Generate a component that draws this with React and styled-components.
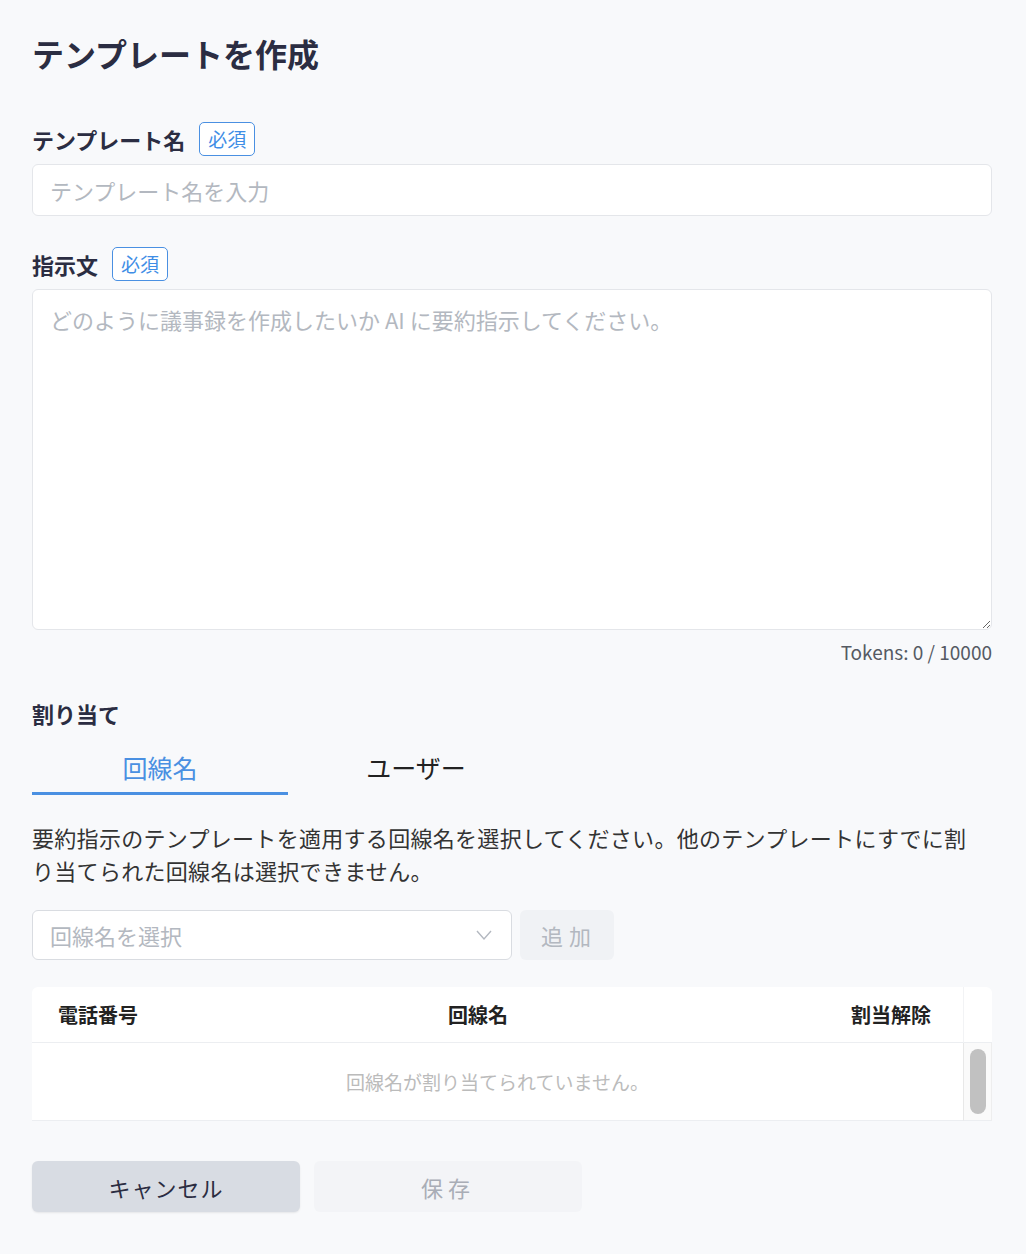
import React, { useState } from "react"
import styled, { createGlobalStyle } from "styled-components"

const GlobalStyle = createGlobalStyle`
  body {
    margin: 0;
    background: #f8f9fb;
    font-family: "Noto Sans CJK JP", "Noto Sans", sans-serif;
    color: #2b2d42;
  }
`

const Page = styled.div`
  padding: 30px 34px 40px 32px;
  display: flex;
  flex-direction: column;
`

const Title = styled.h1`
  margin: 0 0 46px;
  font-size: 32px;
  line-height: 46px;
  font-weight: 700;
  color: #2b2d42;
`

const LabelRow = styled.div`
  display: flex;
  align-items: center;
  gap: 14px;
  margin-bottom: 8px;
`

const Label = styled.span`
  font-size: 22px;
  line-height: 30px;
  font-weight: 700;
  color: #2b2d42;
`

const Badge = styled.span`
  border: 1px solid #4a90e2;
  border-radius: 5px;
  color: #3f8ee6;
  font-size: 19px;
  line-height: 32px;
  padding: 0 8px;
  background: #fff;
`

const Input = styled.input`
  box-sizing: border-box;
  height: 52px;
  width: 100%;
  border: 1px solid #e4e6ea;
  border-radius: 6px;
  background: #fff;
  padding: 0 17px;
  font-size: 22px;
  font-family: inherit;
  margin-bottom: 31px;
  &::placeholder { color: #b3b8c0; }
`

const TextArea = styled.textarea`
  box-sizing: border-box;
  height: 341px;
  width: 100%;
  border: 1px solid #e4e6ea;
  border-radius: 6px;
  background: #fff;
  padding: 13px 17px;
  font-size: 22px;
  line-height: 32px;
  font-family: inherit;
  resize: vertical;
  display: block;
  &::placeholder { color: #b3b8c0; }
`

const Tokens = styled.div`
  text-align: right;
  font-size: 19px;
  line-height: 26px;
  color: #555a63;
  margin-top: 9px;
  margin-bottom: 33px;
`

const Tabs = styled.div`
  display: flex;
  margin-top: 15px;
`

const Tab = styled.button`
  width: 256px;
  height: 52px;
  border: none;
  background: none;
  font-family: inherit;
  font-size: 25px;
  padding: 0 0 2px;
  color: ${({ active }) => (active ? "#4a90e2" : "#222")};
  border-bottom: 3px solid ${({ active }) => (active ? "#4a90e2" : "transparent")};
  cursor: pointer;
`

const Description = styled.p`
  margin: 26px 0 23px;
  font-size: 22px;
  line-height: 33px;
  color: #333;
  padding-right: 20px;
  letter-spacing: 0.3px;
`

const SelectRow = styled.div`
  display: flex;
  gap: 8px;
  margin-bottom: 27px;
`

const Select = styled.div`
  box-sizing: border-box;
  width: 480px;
  height: 50px;
  border: 1px solid #d9dce1;
  border-radius: 6px;
  background: #fff;
  display: flex;
  align-items: center;
  justify-content: space-between;
  padding: 0 18px 0 17px;
  font-size: 22px;
  color: #b3b8c0;
`

const AddButton = styled.button`
  width: 94px;
  height: 50px;
  border: none;
  border-radius: 6px;
  background: #f0f2f5;
  color: #b3b8c0;
  font-family: inherit;
  font-size: 22px;
  letter-spacing: 6px;
  padding-left: 10px;
`

const Table = styled.div`
  background: #fff;
  border-radius: 6px 6px 0 0;
  display: grid;
  grid-template-columns: 1fr 29px;
  margin-bottom: 40px;
`

const HeaderRow = styled.div`
  display: grid;
  grid-template-columns: 390px 1fr auto;
  align-items: center;
  height: 55px;
  padding: 0 32px 0 26px;
  border-bottom: 1px solid #eceef1;
  font-size: 20px;
  font-weight: 700;
  color: #222;
`

const ScrollHead = styled.div`
  border-left: 1px solid #f2f3f5;
  border-bottom: 1px solid #eceef1;
`

const EmptyRow = styled.div`
  height: 77px;
  display: flex;
  align-items: center;
  justify-content: center;
  font-size: 19px;
  color: #bbbbbb;
  border-bottom: 1px solid #eceef1;
`

const Track = styled.div`
  background: #fafafa;
  border-left: 1px solid #e8e8e8;
  border-right: 1px solid #eeeeee;
  padding: 6px 5px 6px 6px;
  border-bottom: 1px solid #eceef1;
`

const Thumb = styled.div`
  height: 100%;
  background: #c1c1c1;
  border-radius: 8px;
`

const Footer = styled.div`
  display: flex;
  gap: 14px;
`

const Button = styled.button`
  width: 268px;
  height: 51px;
  border: none;
  border-radius: 6px;
  font-family: inherit;
  font-size: 22px;
  background: ${({ primary }) => (primary ? "#f3f4f7" : "#d8dce3")};
  color: ${({ primary }) => (primary ? "#a9adb6" : "#2b2d42")};
  letter-spacing: ${({ primary }) => (primary ? "5px" : "1px")};
  box-shadow: ${({ primary }) => (primary ? "none" : "0 1px 2px rgba(0,0,0,0.08)")};
`

const Chevron = () => (
  <svg width="18" height="18" viewBox="0 0 18 18" fill="none">
    <path d="M2 5l7 8 7-8" stroke="#b3b8c0" strokeWidth="1.4" />
  </svg>
)

export default function App() {
  const [tab, setTab] = useState(0)
  return (
    <>
      <GlobalStyle />
      <Page>
        <Title>テンプレートを作成</Title>

        <LabelRow>
          <Label>テンプレート名</Label>
          <Badge>必須</Badge>
        </LabelRow>
        <Input placeholder="テンプレート名を入力" />

        <LabelRow>
          <Label>指示文</Label>
          <Badge>必須</Badge>
        </LabelRow>
        <TextArea placeholder="どのように議事録を作成したいか AI に要約指示してください。" />
        <Tokens>Tokens: 0 / 10000</Tokens>

        <Label>割り当て</Label>
        <Tabs>
          <Tab active={tab === 0} onClick={() => setTab(0)}>回線名</Tab>
          <Tab active={tab === 1} onClick={() => setTab(1)}>ユーザー</Tab>
        </Tabs>
        <Description>
          要約指示のテンプレートを適用する回線名を選択してください。他のテンプレートにすでに割り当てられた回線名は選択できません。
        </Description>

        <SelectRow>
          <Select>
            回線名を選択
            <Chevron />
          </Select>
          <AddButton>追加</AddButton>
        </SelectRow>

        <Table>
          <HeaderRow>
            <span>電話番号</span>
            <span>回線名</span>
            <span>割当解除</span>
          </HeaderRow>
          <ScrollHead />
          <EmptyRow>回線名が割り当てられていません。</EmptyRow>
          <Track>
            <Thumb />
          </Track>
        </Table>

        <Footer>
          <Button>キャンセル</Button>
          <Button primary>保存</Button>
        </Footer>
      </Page>
    </>
  )
}
